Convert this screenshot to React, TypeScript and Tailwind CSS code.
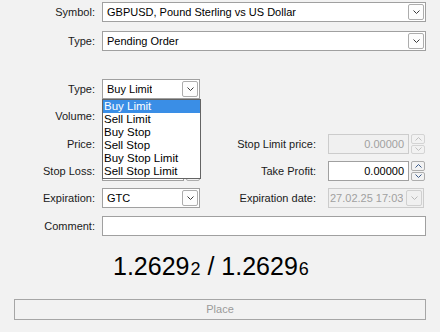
import React from 'react';

const Chevron: React.FC<{ up?: boolean; color?: string }> = ({ up, color = '#333' }) => (
  <svg width="7" height="4" viewBox="0 0 7 4">
    <path d={up ? 'M0.5 3.5 L3.5 0.5 L6.5 3.5' : 'M0.5 0.5 L3.5 3.5 L6.5 0.5'} fill="none" stroke={color} strokeWidth="1" />
  </svg>
);

const DropButton: React.FC<{ disabled?: boolean }> = ({ disabled }) => (
  <div
    className={`w-[16px] h-[16px] mr-[1px] shrink-0 flex items-center justify-center rounded-[2px] border ${
      disabled ? 'border-[#d0d0d0] bg-[#f0f0f0]' : 'border-[#adadad] bg-[#fdfdfd]'
    }`}
  >
    <Chevron color={disabled ? '#b8b8b8' : '#3a3a3a'} />
  </div>
);

const Combo: React.FC<{ value: string; className?: string; disabled?: boolean }> = ({ value, className = '', disabled }) => (
  <div
    className={`h-[20px] flex items-center justify-between border ${
      disabled ? 'border-[#cccccc] bg-[#f0f0f0] text-[#a0a0a0]' : 'border-[#a0a0a0] bg-white text-black'
    } ${className}`}
  >
    <span className={`whitespace-nowrap overflow-hidden ${disabled ? 'pl-[1px]' : 'pl-[4px]'}`}>{value}</span>
    <DropButton disabled={disabled} />
  </div>
);

const Spinner: React.FC<{ disabled?: boolean }> = ({ disabled }) => {
  const c = disabled ? '#c0c0c0' : '#3a5a8a';
  const b = disabled ? 'border-[#d4d4d4]' : 'border-[#adadad]';
  return (
    <div className="ml-[2px] w-[14px] h-[20px] flex flex-col gap-[1px]">
      <div className={`flex-1 flex items-center justify-center rounded-[2px] border ${b}`}>
        <Chevron up color={c} />
      </div>
      <div className={`flex-1 flex items-center justify-center rounded-[2px] border ${b}`}>
        <Chevron color={c} />
      </div>
    </div>
  );
};

const NumInput: React.FC<{ value?: string; disabled?: boolean; className?: string }> = ({ value, disabled, className = '' }) => (
  <div className="flex items-center">
    <div
      className={`h-[20px] flex items-center justify-end pr-[4px] border ${
        disabled ? 'border-[#cccccc] bg-[#f0f0f0] text-[#a0a0a0]' : 'border-[#a0a0a0] bg-white text-black'
      } ${className}`}
    >
      {value}
    </div>
    <Spinner disabled={disabled} />
  </div>
);

const Label: React.FC<{ text: string }> = ({ text }) => (
  <div className="w-[96px] pr-[1px] text-right text-[#1a1a1a]">{text}</div>
);

const RightLabel: React.FC<{ text: string }> = ({ text }) => (
  <div className="w-[128px] pr-[12px] text-right text-[#1a1a1a]">{text}</div>
);

const options = ['Buy Limit', 'Sell Limit', 'Buy Stop', 'Sell Stop', 'Buy Stop Limit', 'Sell Stop Limit'];

export default function App() {
  return (
    <div
      className="w-[440px] h-[332px] bg-[#f2f2f2] text-[11px] relative overflow-hidden"
      style={{ fontFamily: '"Liberation Sans", Arial, sans-serif' }}
    >
      <div className="pt-[2px] flex flex-col">
        <div className="h-[20px] flex items-center">
          <Label text="Symbol:" />
          <Combo value="GBPUSD, Pound Sterling vs US Dollar" className="ml-[6px] w-[324px]" />
        </div>
        <div className="mt-[9px] h-[20px] flex items-center">
          <Label text="Type:" />
          <Combo value="Pending Order" className="ml-[6px] w-[324px]" />
        </div>

        <div className="mt-[28px] h-[20px] flex items-center">
          <Label text="Type:" />
          <Combo value="Buy Limit" className="ml-[6px] w-[98px]" />
        </div>
        <div className="mt-[7px] h-[20px] flex items-center">
          <Label text="Volume:" />
          <NumInput className="ml-[6px] w-[82px]" />
        </div>
        <div className="mt-[8px] h-[20px] flex items-center">
          <Label text="Price:" />
          <NumInput className="ml-[6px] w-[82px]" />
          <RightLabel text="Stop Limit price:" />
          <NumInput value="0.00000" disabled className="w-[81px]" />
        </div>
        <div className="mt-[7px] h-[20px] flex items-center">
          <Label text="Stop Loss:" />
          <NumInput className="ml-[6px] w-[82px]" />
          <RightLabel text="Take Profit:" />
          <NumInput value="0.00000" className="w-[81px]" />
        </div>
        <div className="mt-[7px] h-[20px] flex items-center">
          <Label text="Expiration:" />
          <Combo value="GTC" className="ml-[6px] w-[98px]" />
          <div className="w-[128px] pr-[12px] text-right text-[#1a1a1a]">Expiration date:</div>
          <Combo value="27.02.25 17:03" disabled className="w-[96px]" />
        </div>
        <div className="mt-[8px] h-[20px] flex items-center">
          <Label text="Comment:" />
          <div className="ml-[6px] w-[324px] h-[20px] border border-[#a0a0a0] bg-white" />
        </div>

        <div className="mt-[18px] h-[22px] flex items-baseline pl-[113px] text-black leading-none">
          <span className="text-[25px]">1.2629</span>
          <span className="text-[18px] ml-[1px]">2</span>
          <span className="text-[25px] whitespace-pre"> / 1.2629</span>
          <span className="text-[18px] ml-[1px]">6</span>
        </div>

        <div className="mt-[23px] mx-[14px] h-[21px] border border-[#a6a6a6] flex items-center justify-center text-[#9a9a9a]">
          Place
        </div>
      </div>

      <div className="absolute left-[102px] top-[99px] w-[99px] h-[80px] border border-[#646464] bg-white text-black leading-[13px] text-[11.5px]">
        {options.map((o, i) => (
          <div key={o} className={`h-[13px] pl-[1px] ${i === 0 ? 'bg-[#3a8ee6] text-white' : ''}`}>
            {o}
          </div>
        ))}
      </div>
    </div>
  );
}
